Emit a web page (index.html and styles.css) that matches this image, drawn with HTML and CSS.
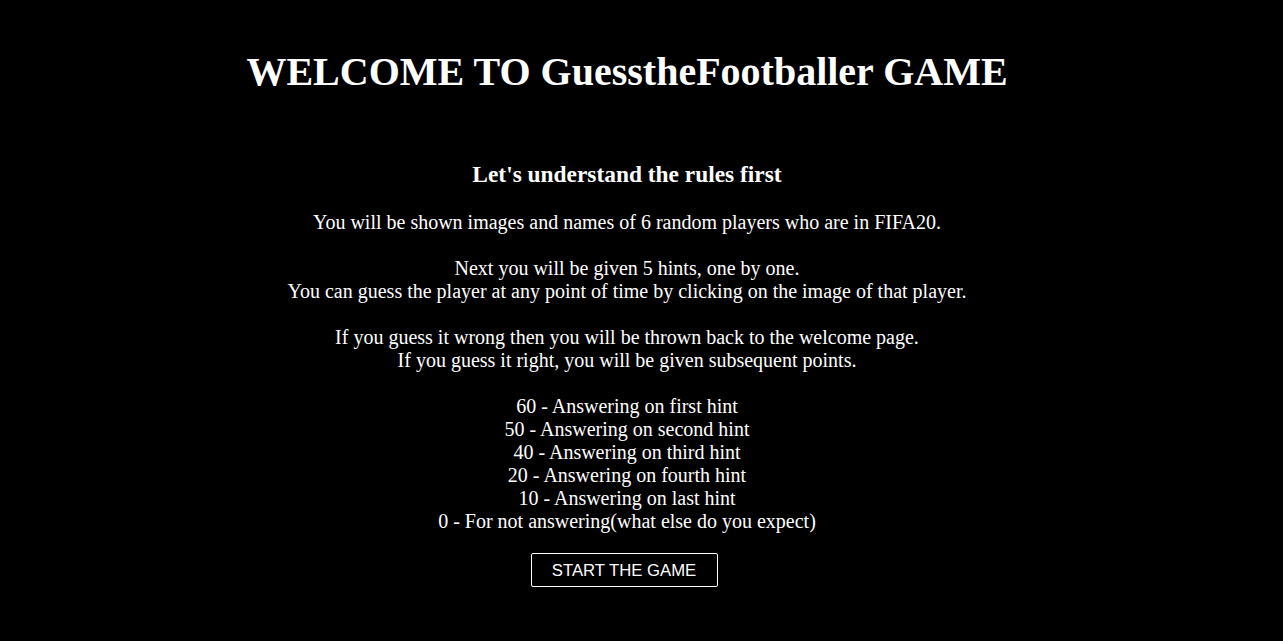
FILE: index.html
```html
<!DOCTYPE html>
<html>
<head>
<meta charset="utf-8">
<link rel="stylesheet" href="styles.css">
<title>GuesstheFootballer</title>
</head>
<body>
<div class="page">
  <h1 class="title">WELCOME TO GuesstheFootballer GAME</h1>
  <h3 class="subtitle">Let's understand the rules first</h3>
  <p class="rules">You will be shown images and names of 6 random players who are in FIFA20.<br><br>Next you will be given 5 hints, one by one.<br>You can guess the player at any point of time by clicking on the image of that player.<br><br>If you guess it wrong then you will be thrown back to the welcome page.<br>If you guess it right, you will be given subsequent points.<br><br>60 - Answering on first hint<br>50 - Answering on second hint<br>40 - Answering on third hint<br>20 - Answering on fourth hint<br>10 - Answering on last hint<br>0 - For not answering(what else do you expect)</p>
  <button class="start">START THE GAME</button>
</div>
</body>
</html>
```
FILE: styles.css
```css
html, body {
  margin: 0;
  background: #000;
}
.page {
  width: 1254px;
  display: flex;
  flex-direction: column;
  align-items: center;
  text-align: center;
  color: #fff;
  font-family: "Liberation Serif", "Times New Roman", serif;
  font-size: 20px;
  padding-top: 48px;
}
.title {
  font-size: 40px;
  font-weight: bold;
  margin: 0 0 66px;
}
.subtitle {
  font-size: 1.17em;
  font-weight: bold;
  margin: 0 0 23px;
}
.rules {
  margin: 0 0 20px;
  line-height: 23px;
}
.start {
  background: #000;
  color: #fff;
  border: 1px solid #fff;
  border-radius: 2px;
  font-family: "Liberation Sans", Arial, sans-serif;
  font-size: 16.7px;
  padding: 7px 10px;
  width: 187px;
  height: 34px;
  margin-right: 6px;
}
```
